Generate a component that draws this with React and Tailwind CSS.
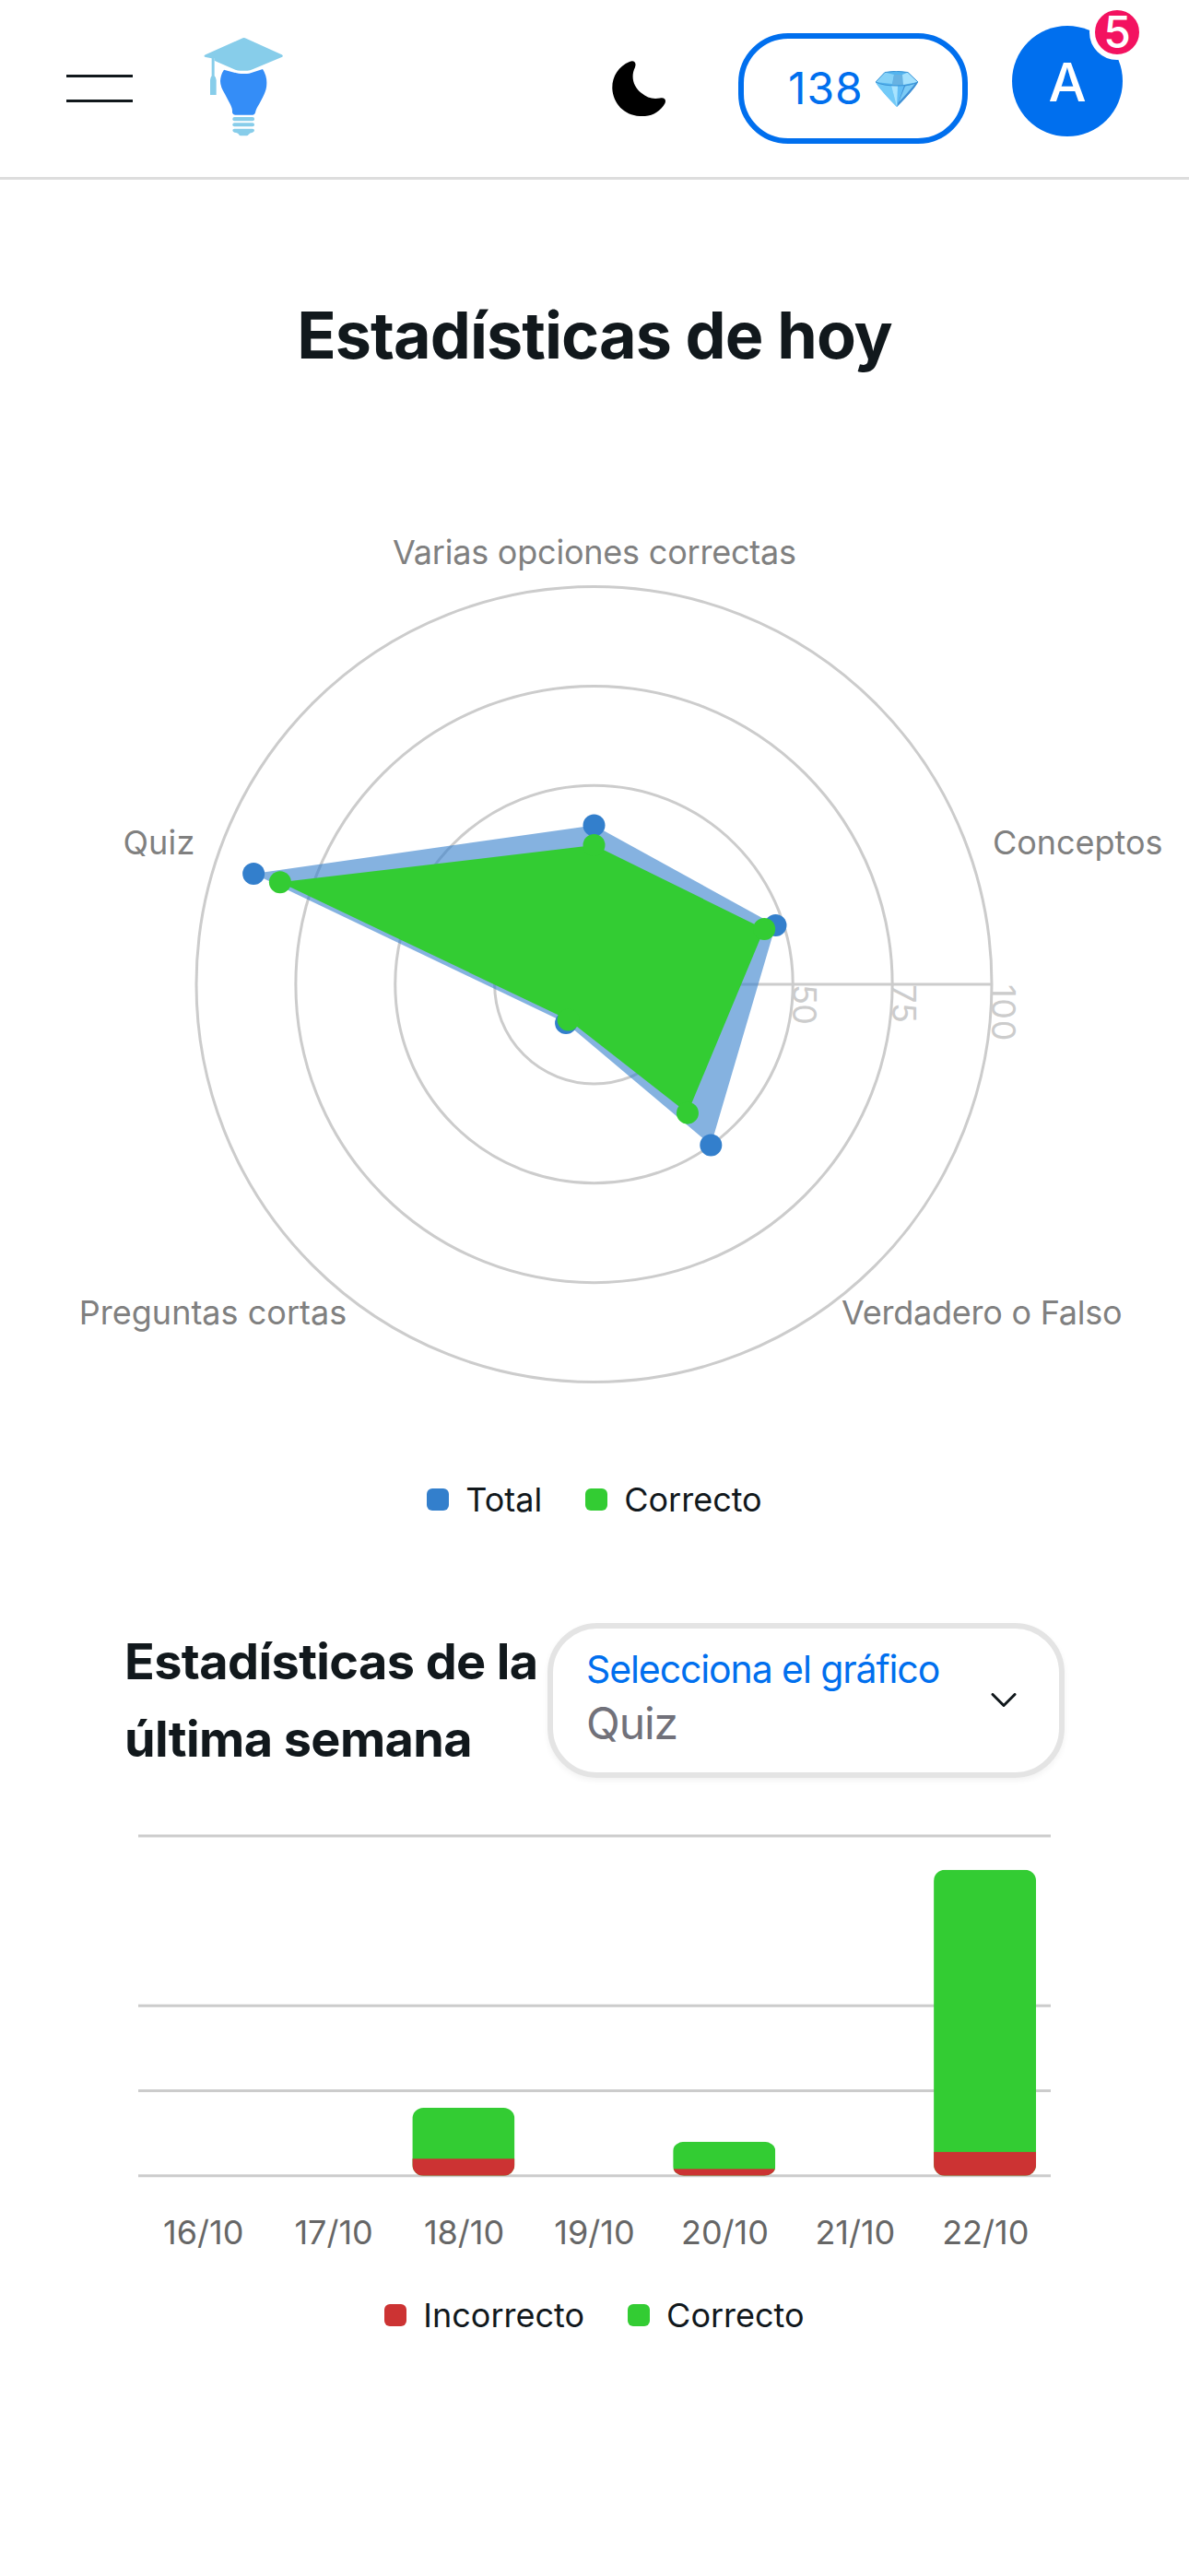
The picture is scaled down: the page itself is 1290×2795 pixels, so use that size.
const CX = 644.5;
const CY = 1068;
const RADIUS = 431.5;

const radar = [
  { total: 40, correct: 35 },
  { total: 48, correct: 45 },
  { total: 50, correct: 40 },
  { total: 12, correct: 11 },
  { total: 90, correct: 83 },
];

const radarLabels = [
  { text: "Varias opciones correctas", x: 426, y: 611.5, width: 438 },
  { text: "Conceptos", x: 1077, y: 926.5, width: 184.5 },
  { text: "Verdadero o Falso", x: 913, y: 1436.5, width: 304.6 },
  { text: "Preguntas cortas", x: 85.8, y: 1436.5, width: 290.4 },
  { text: "Quiz", x: 133.4, y: 926.5, width: 78 },
];

const ticks = [
  { value: 25, width: 41 },
  { value: 50, width: 44 },
  { value: 75, width: 42 },
  { value: 100, width: 61.5 },
];

const week = [
  { day: "16/10", wrong: 0, right: 0 },
  { day: "17/10", wrong: 0, right: 0 },
  { day: "18/10", wrong: 5, right: 15 },
  { day: "19/10", wrong: 0, right: 0 },
  { day: "20/10", wrong: 2, right: 8 },
  { day: "21/10", wrong: 0, right: 0 },
  { day: "22/10", wrong: 7, right: 83 },
];

function vertex(value, i) {
  const a = ((-90 + i * 72) * Math.PI) / 180;
  const r = (value / 100) * RADIUS;
  return [CX + r * Math.cos(a), CY + r * Math.sin(a)];
}

function Series({ field, color, opacity }) {
  const pts = radar.map((d, i) => vertex(d[field], i));
  return (
    <g fill={color}>
      <polygon points={pts.map((p) => p.join(",")).join(" ")} fillOpacity={opacity} />
      {pts.map(([x, y], i) => (
        <circle key={i} cx={x} cy={y} r="12" />
      ))}
    </g>
  );
}

function RadarChart() {
  return (
    <svg className="block w-full" viewBox="0 417 1290 1173" fontSize="36">
      <g fill="none" stroke="#cccccc" strokeWidth="3">
        {[0.25, 0.5, 0.75, 1].map((f) => (
          <circle key={f} cx={CX} cy={CY} r={RADIUS * f} />
        ))}
        <path d={`M${CX} ${CY}H${CX + RADIUS}`} />
      </g>
      <g fill="#cccccc">
        {ticks.map((t) => (
          <text
            key={t.value}
            transform={`translate(${CX + (RADIUS * t.value) / 100 - 0.5} ${CY}) rotate(90)`}
            textLength={t.width}
          >
            {t.value}
          </text>
        ))}
      </g>
      <g fill="#808080">
        {radarLabels.map((l) => (
          <text key={l.text} x={l.x} y={l.y} textLength={l.width}>
            {l.text}
          </text>
        ))}
      </g>
      <Series field="total" color="#337fcc" opacity="0.6" />
      <Series field="correct" color="#33cc33" opacity="1" />
    </svg>
  );
}

function BarChart() {
  const base = 2360.7;
  const unit = 3.688;
  const slot = 141.43;
  return (
    <svg className="block w-full" viewBox="0 1929 1290 546" fontSize="36">
      <g stroke="#cccccc" strokeWidth="3">
        {[0, 25, 50, 100].map((v) => (
          <path key={v} d={`M150 ${base - v * unit}H1140`} />
        ))}
      </g>
      {week.map((d, i) => {
        const x = 150 + slot * i + 14.5;
        const total = (d.wrong + d.right) * unit;
        return (
          <g key={d.day}>
            {total > 0 && (
              <>
                <clipPath id={`bar-${i}`}>
                  <rect x={x} y={base - total} width="111" height={total} rx="12" ry={i === 4 ? 10 : 12} />
                </clipPath>
                <g clipPath={`url(#bar-${i})`}>
                  <rect x={x} y={base - total} width="111" height={total} fill="#33cc33" />
                  <rect x={x} y={base - d.wrong * unit} width="111" height={d.wrong * unit} fill="#cc3333" />
                </g>
              </>
            )}
            <text x={150 + slot * (i + 0.5)} y="2435" textAnchor="middle" fill="#666666">
              {d.day}
            </text>
          </g>
        );
      })}
    </svg>
  );
}

function Legend({ items }) {
  return (
    <div className="flex h-[73px] items-center justify-center gap-[47px] text-[36px]">
      {items.map(([label, swatch]) => (
        <div key={label} className="flex items-center gap-[18px]">
          <span className={`size-6 rounded-[6px] ${swatch}`} />
          <span>{label}</span>
        </div>
      ))}
    </div>
  );
}

function Logo() {
  return (
    <svg className="mb-3 ml-14 h-[140px] w-[130px]" viewBox="0 0 390 420" fill="#87cdea">
      <path d="M187 65Q194 61 201 65L317 118Q324 122 317 126L222 166Q214 170 206 170H182Q174 170 166 167L104 140L98 137V130L89 130L69 126Q60 122 69 118Z" />
      <path d="M89 128H98V187Q104 193 104 201V249H84V201Q84 193 89 187Z" />
      <path
        fill="#348df7"
        d="M129 167L170 178Q177 180 184 180H204Q211 180 218 177L255 165Q269 187 268 212C268 238 254 258 243 280Q232 297 231 307Q229 314 223 314H165Q158 314 156 307V299C155 285 142 267 132 246Q117 222 117 204Q118 183 129 167Z"
      />
      <rect x="157" y="321" width="71" height="13" rx="6" />
      <rect x="157" y="340" width="71" height="12" rx="6" />
      <path d="M163 359H222Q228 359 228 364Q228 369 222 371Q213 372 209 378Q207 382 202 382H184Q179 382 177 377Q175 372 163 371Q157 369 157 364Q157 359 163 359Z" />
    </svg>
  );
}

function Moon() {
  return (
    <svg className="h-[60px] w-[58px]" viewBox="664 66 58 60">
      <path d="M683 67C687 65 691 67 689 73C684 83 687 94 696 101C702 106 708 108 716 106.500C721 105.500 723 108 721.500 112C716 122 706 127 694 126C677 125 665 112 664.300 96C664 83 671 72 683 67Z" />
    </svg>
  );
}

function Gem() {
  return (
    <svg className="h-[39px] w-[46px]" viewBox="0 0 46 39">
      <path fill="#54b4ee" d="M10 1.500Q22 -1 35 1.500L46 12Q44 17 23 39Q2 17 0 12Z" />
      <path fill="#86d2f8" d="M10 1.500L20 4L18 14L0 12Z" />
      <path fill="#68b2e2" d="M20 4H29L30 15H18Z" />
      <path fill="#a5e1fd" d="M35 1.500L46 12L30 15L29 4Z" />
      <path fill="#72caf8" d="M0 12Q8 16 17 16L23 39Q5 21 0 12Z" />
      <path fill="#a8e4ff" d="M17 16H24V37L23 39Z" />
      <path fill="#62bdf5" d="M24 16H31L23 39Z" />
      <path fill="#3f8fd4" d="M46 12Q40 15 31 16L23 39Q42 20 46 12Z" />
      <path fill="#7ccbf6" d="M43 13.500Q38 15.500 32 16.500L25 34Q39 19 43 13.500Z" />
      <path fill="none" stroke="#3c94d6" strokeWidth="1" d="M10 1.500Q22 -1 35 1.500L46 12Q38 16 23 16Q8 16 0 12Z" />
    </svg>
  );
}

function Header() {
  return (
    <header className="flex h-[195px] items-center border-b-[3px] border-[#dddddd] px-[72px]">
      <button className="flex w-[72px] flex-col gap-6" aria-label="Menú">
        <span className="h-[3px] w-full bg-[#11181c]" />
        <span className="h-[3px] w-full bg-[#11181c]" />
      </button>
      <Logo />
      <div className="ml-auto flex items-center">
        <Moon />
        <button className="ml-[79px] flex h-[120px] w-[249px] items-center rounded-[54px] border-[6px] border-[#006fee] pl-12 text-[48px] tracking-[0.9px] text-[#006fee]">
          <span>138</span>
          <span className="ml-[13px]">
            <Gem />
          </span>
        </button>
        <div className="relative mb-4 ml-12 flex size-[120px] items-center justify-center rounded-full bg-[#006fee] text-[58px] font-medium text-white">
          <span className="mt-[3px]">A</span>
          <span className="absolute -top-[23px] -right-[24px] flex size-[60px] items-center justify-center rounded-full border-[6px] border-white bg-[#f31260] text-[48px] leading-none">
            5
          </span>
        </div>
      </div>
    </header>
  );
}

export default function App() {
  return (
    <div className="h-[2795px] w-[1290px] overflow-hidden bg-white font-['Inter',sans-serif] text-[#11181c]">
      <Header />
      <main>
        <h1 className="mt-[115px] text-center text-[70px] leading-[107px] font-bold tracking-[-0.93px]">
          Estadísticas de hoy
        </h1>
        <RadarChart />
        <Legend
          items={[
            ["Total", "bg-[#337fcc]"],
            ["Correcto", "bg-[#33cc33]"],
          ]}
        />
        <section className="mt-[98px]">
          <div className="flex items-center pr-[135px] pl-[135px]">
            <h2 className="w-[459px] text-[54px] leading-[84px] font-bold tracking-[-0.6px]">
              Estadísticas de la
              <br />
              última semana
            </h2>
            <button className="flex h-[168px] flex-1 items-center justify-between rounded-[54px] border-[6px] border-[#e4e4e4] pr-[46px] pl-[36px] text-left shadow-[0_3px_6px_rgba(0,0,0,0.05)]">
              <span className="mb-[8px] flex flex-col">
                <span className="text-[41px] leading-[56px] tracking-[-1.1px] whitespace-nowrap text-[#006fee]">
                  Selecciona el gráfico
                </span>
                <span className="text-[48px] leading-[61px] tracking-[-1.05px] text-[#71717a]">Quiz</span>
              </span>
              <svg className="h-[16px] w-[28px]" viewBox="0 0 28 16" fill="none" stroke="#11181c" strokeWidth="3" strokeLinecap="round" strokeLinejoin="round">
                <path d="M2 1.500L14 13.500L26 1.500" />
              </svg>
            </button>
          </div>
          <BarChart />
          <Legend
            items={[
              ["Incorrecto", "bg-[#cc3333]"],
              ["Correcto", "bg-[#33cc33]"],
            ]}
          />
        </section>
      </main>
    </div>
  );
}
